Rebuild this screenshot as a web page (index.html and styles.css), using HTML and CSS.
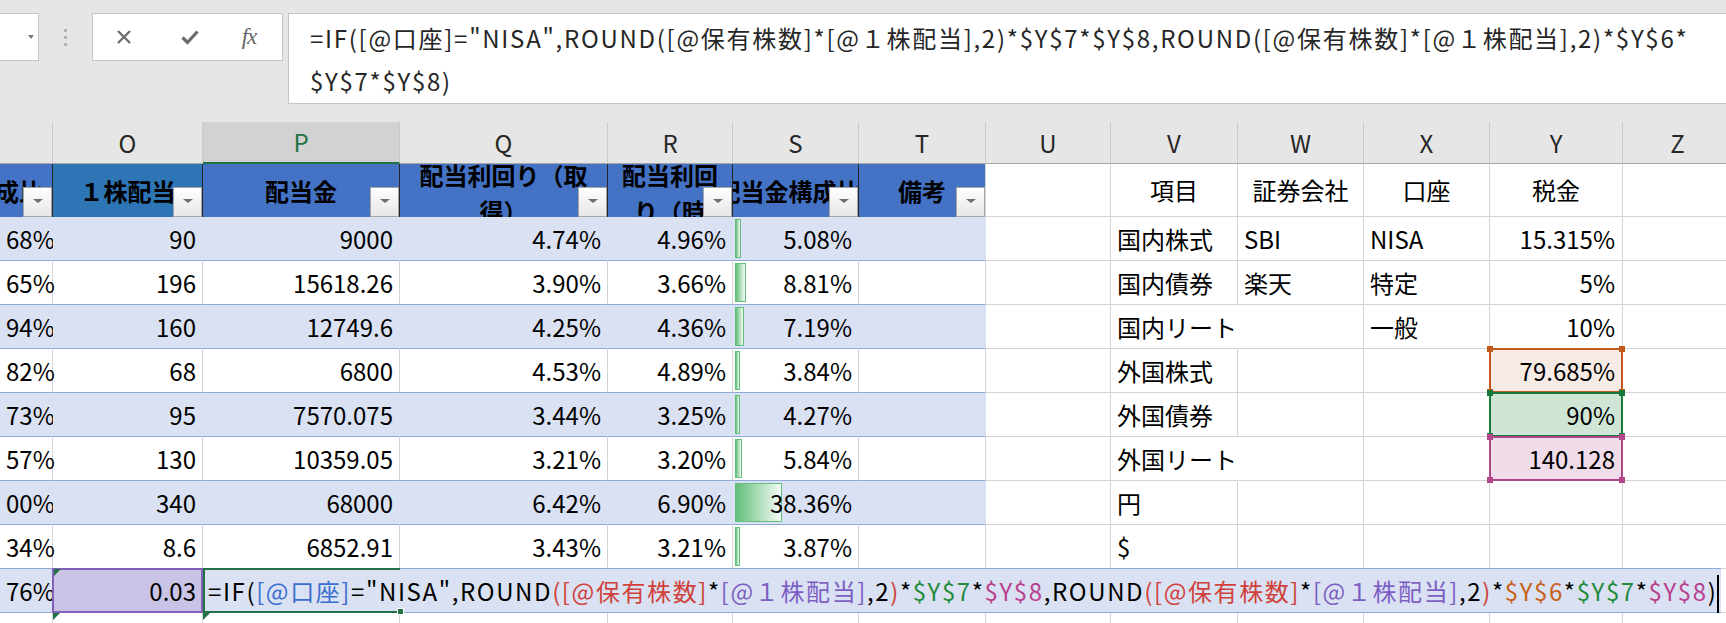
FILE: index.html
```html
<!DOCTYPE html>
<html lang="ja">
<head>
    <meta charset="UTF-8">
    <title>配当金一覧</title>
    <link rel="stylesheet" href="styles.css">
</head>
<body>
    <div class="topbar">
        <div class="namebox"><span class="nb-arrow"></span></div>
        <div class="grip"><i></i><i></i><i></i></div>
        <div class="fbtns">
            <span class="fbtn">
                <svg width="16" height="16" viewBox="0 0 16 16"><path d="M2 2 L14 14 M14 2 L2 14" stroke="#6a6a6a" stroke-width="2.2" fill="none"/></svg>
            </span>
            <span class="fbtn">
                <svg width="18" height="16" viewBox="0 0 18 16"><path d="M1.5 8.5 L6.5 13.5 L16.5 2.5" stroke="#6a6a6a" stroke-width="3.2" fill="none"/></svg>
            </span>
            <span class="fbtn fx">fx</span>
        </div>
        <div class="fbox">=IF([@口座]="NISA",ROUND([@保有株数]*[@１株配当],2)*$Y$7*$Y$8,ROUND([@保有株数]*[@１株配当],2)*$Y$6*<br>$Y$7*$Y$8)</div>
    </div>

    <div class="sheet">
        <!-- column letters -->
        <div class="row colhead">
            <div class="c"></div>
            <div class="c">O</div>
            <div class="c sel">P</div>
            <div class="c">Q</div>
            <div class="c">R</div>
            <div class="c">S</div>
            <div class="c">T</div>
            <div class="c">U</div>
            <div class="c">V</div>
            <div class="c">W</div>
            <div class="c">X</div>
            <div class="c">Y</div>
            <div class="c">Z</div>
        </div>

        <!-- table header -->
        <div class="row thead">
            <div class="c t first"><span>構成比</span><i class="flt"></i></div>
            <div class="c t alt">１株配当<i class="flt"></i></div>
            <div class="c t">配当金<i class="flt"></i></div>
            <div class="c t wrap"><div class="lines">配当利回り（取<br>得）</div><i class="flt"></i></div>
            <div class="c t wrap"><div class="lines">配当利回<br>り（時<br>価）</div><i class="flt"></i></div>
            <div class="c t"><span class="shift">配当金構成比</span><i class="flt"></i></div>
            <div class="c t last">備考<i class="flt"></i></div>
            <div class="c"></div>
            <div class="c ctr">項目</div>
            <div class="c ctr">証券会社</div>
            <div class="c ctr">口座</div>
            <div class="c ctr">税金</div>
            <div class="c"></div>
        </div>

        <div class="row band">
            <div class="c t">68%</div>
            <div class="c t">90</div>
            <div class="c t">9000</div>
            <div class="c t">4.74%</div>
            <div class="c t">4.96%</div>
            <div class="c t s"><span class="bar" style="width:6px"></span><span class="v">5.08%</span></div>
            <div class="c t"></div>
            <div class="c"></div>
            <div class="c l">国内株式</div>
            <div class="c l">SBI</div>
            <div class="c l">NISA</div>
            <div class="c r">15.315%</div>
            <div class="c"></div>
        </div>

        <div class="row">
            <div class="c t">65%</div>
            <div class="c t">196</div>
            <div class="c t">15618.26</div>
            <div class="c t">3.90%</div>
            <div class="c t">3.66%</div>
            <div class="c t s"><span class="bar" style="width:11px"></span><span class="v">8.81%</span></div>
            <div class="c t"></div>
            <div class="c"></div>
            <div class="c l">国内債券</div>
            <div class="c l">楽天</div>
            <div class="c l">特定</div>
            <div class="c r">5%</div>
            <div class="c"></div>
        </div>

        <div class="row band">
            <div class="c t">94%</div>
            <div class="c t">160</div>
            <div class="c t">12749.6</div>
            <div class="c t">4.25%</div>
            <div class="c t">4.36%</div>
            <div class="c t s"><span class="bar" style="width:9px"></span><span class="v">7.19%</span></div>
            <div class="c t"></div>
            <div class="c"></div>
            <div class="c l spill">国内リート</div>
            <div class="c l"></div>
            <div class="c l">一般</div>
            <div class="c r">10%</div>
            <div class="c"></div>
        </div>

        <div class="row">
            <div class="c t">82%</div>
            <div class="c t">68</div>
            <div class="c t">6800</div>
            <div class="c t">4.53%</div>
            <div class="c t">4.89%</div>
            <div class="c t s"><span class="bar" style="width:5px"></span><span class="v">3.84%</span></div>
            <div class="c t"></div>
            <div class="c"></div>
            <div class="c l">外国株式</div>
            <div class="c l"></div>
            <div class="c l"></div>
            <div class="c r ref-o">79.685%<span class="rb"><i class="h tl"></i><i class="h tr"></i><i class="h bl"></i><i class="h br"></i></span></div>
            <div class="c"></div>
        </div>

        <div class="row band">
            <div class="c t">73%</div>
            <div class="c t">95</div>
            <div class="c t">7570.075</div>
            <div class="c t">3.44%</div>
            <div class="c t">3.25%</div>
            <div class="c t s"><span class="bar" style="width:5px"></span><span class="v">4.27%</span></div>
            <div class="c t"></div>
            <div class="c"></div>
            <div class="c l">外国債券</div>
            <div class="c l"></div>
            <div class="c l"></div>
            <div class="c r ref-g">90%<span class="rb"><i class="h tl"></i><i class="h tr"></i><i class="h bl"></i><i class="h br"></i></span></div>
            <div class="c"></div>
        </div>

        <div class="row">
            <div class="c t">57%</div>
            <div class="c t">130</div>
            <div class="c t">10359.05</div>
            <div class="c t">3.21%</div>
            <div class="c t">3.20%</div>
            <div class="c t s"><span class="bar" style="width:7px"></span><span class="v">5.84%</span></div>
            <div class="c t"></div>
            <div class="c"></div>
            <div class="c l spill">外国リート</div>
            <div class="c l"></div>
            <div class="c l"></div>
            <div class="c r ref-m">140.128<span class="rb"><i class="h tl"></i><i class="h tr"></i><i class="h bl"></i><i class="h br"></i></span></div>
            <div class="c"></div>
        </div>

        <div class="row band">
            <div class="c t">00%</div>
            <div class="c t">340</div>
            <div class="c t">68000</div>
            <div class="c t">6.42%</div>
            <div class="c t">6.90%</div>
            <div class="c t s"><span class="bar" style="width:47px"></span><span class="v">38.36%</span></div>
            <div class="c t"></div>
            <div class="c"></div>
            <div class="c l">円</div>
            <div class="c l"></div>
            <div class="c l"></div>
            <div class="c r"></div>
            <div class="c"></div>
        </div>

        <div class="row">
            <div class="c t">34%</div>
            <div class="c t">8.6</div>
            <div class="c t">6852.91</div>
            <div class="c t">3.43%</div>
            <div class="c t">3.21%</div>
            <div class="c t s"><span class="bar" style="width:5px"></span><span class="v">3.87%</span></div>
            <div class="c t"></div>
            <div class="c"></div>
            <div class="c l">$</div>
            <div class="c l"></div>
            <div class="c l"></div>
            <div class="c r"></div>
            <div class="c"></div>
        </div>

        <!-- row being edited -->
        <div class="row band">
            <div class="c t">76%</div>
            <div class="c t pick">0.03<span class="rb ref-p"></span><i class="tri"></i></div>
            <div class="c t editc">
                <div class="edit">=IF(<span class="f1">[@口座]</span>="NISA",ROUND<span class="f2">([@保有株数]</span>*<span class="f3">[@１株配当]</span>,2<span class="f2">)</span>*<span class="f4">$Y$7</span>*<span class="f5">$Y$8</span>,ROUND<span class="f2">([@保有株数]</span>*<span class="f3">[@１株配当]</span>,2<span class="f2">)</span>*<span class="f6">$Y$6</span>*<span class="f4">$Y$7</span>*<span class="f5">$Y$8</span>)<span class="caret"></span></div>
                <div class="selbox"><span class="handle"></span></div>
            </div>
            <div class="c t"></div>
            <div class="c t"></div>
            <div class="c t"></div>
            <div class="c t"></div>
            <div class="c"></div>
            <div class="c"></div>
            <div class="c"></div>
            <div class="c"></div>
            <div class="c"></div>
            <div class="c"></div>
        </div>

        <div class="row">
            <div class="c t"></div>
            <div class="c t mark"><i class="tri"></i></div>
            <div class="c t mark"><i class="tri"></i></div>
            <div class="c t"></div>
            <div class="c t"></div>
            <div class="c t"></div>
            <div class="c t"></div>
            <div class="c"></div>
            <div class="c"></div>
            <div class="c"></div>
            <div class="c"></div>
            <div class="c"></div>
            <div class="c"></div>
        </div>
    </div>
</body>
</html>
```

FILE: styles.css
```css
* {
    box-sizing: border-box;
}
body {
    margin: 0;
    width: 1726px;
    height: 623px;
    overflow: hidden;
    background: #fff;
    font-family: "Noto Sans CJK JP", "Noto Sans", sans-serif;
    color: #000;
}

/* formula bar */
.topbar {
    height: 122px;
    background: #e6e6e6;
    display: flex;
    align-items: flex-start;
    padding-top: 13px;
}
.namebox {
    width: 49px;
    height: 48px;
    margin-left: -10px;
    background: #fff;
    border: 1px solid #c6c6c6;
    display: flex;
    align-items: center;
    justify-content: flex-end;
    padding-right: 4px;
}
.nb-arrow {
    width: 0;
    height: 0;
    border-left: 3.5px solid transparent;
    border-right: 3.5px solid transparent;
    border-top: 4px solid #7a7a7a;
}
.grip {
    width: 53px;
    height: 48px;
    display: flex;
    flex-direction: column;
    align-items: center;
    justify-content: center;
    gap: 4px;
}
.grip i {
    width: 3px;
    height: 3px;
    background: #b4b4b4;
}
.fbtns {
    width: 191px;
    height: 48px;
    background: #fff;
    border: 1px solid #c6c6c6;
    display: grid;
    grid-template-columns: 62px 70px 48px;
    align-items: center;
}
.fbtn {
    display: flex;
    justify-content: center;
    align-items: center;
}
.fx {
    font-family: "Liberation Serif", serif;
    font-style: italic;
    font-size: 23px;
    color: #666;
    letter-spacing: -1px;
}
.fbox {
    flex: 1;
    height: 91px;
    margin-left: 5px;
    margin-right: -10px;
    background: #fff;
    border: 1px solid #c6c6c6;
    padding: 2px 0 0 21px;
    font-size: 24px;
    letter-spacing: 1.72px;
    line-height: 43px;
    color: #262626;
    white-space: nowrap;
    overflow: hidden;
}

/* grid */
.row {
    display: grid;
    grid-template-columns: 53px 150px 197px 208px 125px 126px 127px 125px 127px 126px 126px 133px 110px;
}
.c {
    height: 44px;
    border-right: 1px solid #d4d4d4;
    border-bottom: 1px solid #d4d4d4;
    font-size: 24px;
    line-height: 43px;
    padding: 0 6px;
    white-space: nowrap;
}
.c.l {
    text-align: left;
}
.c.r {
    text-align: right;
    padding-right: 7px;
}
.c.ctr {
    text-align: center;
}
.spill {
    border-right-color: transparent;
}

.colhead .c {
    height: 42px;
    line-height: 41px;
    background: #e6e6e6;
    border-right-color: #cacaca;
    border-bottom-color: #a6a6a6;
    text-align: center;
    color: #262626;
}
.colhead .sel {
    background: #d2d2d2;
    color: #217346;
    border-bottom: 2px solid #217346;
    line-height: 40px;
}

.thead .c {
    height: 53px;
    line-height: 52px;
}
.thead .t {
    position: relative;
    overflow: hidden;
    padding: 0;
    background: #4472c4;
    font-weight: bold;
    line-height: 53px;
    border-bottom: none;
    border-right: 1px solid #262626;
    display: flex;
    justify-content: center;
}
.thead .t.alt {
    background: #2e75b6;
}
.thead .t.first {
    justify-content: flex-end;
    padding-right: 9px;
}
.thead .t.last {
    border-right-color: #d4d4d4;
}
.thead .wrap {
    align-items: flex-start;
}
.shift {
    margin-left: -14px;
}
.lines {
    margin-top: -7px;
    line-height: 36px;
    text-align: center;
}
.flt {
    position: absolute;
    right: 0;
    bottom: 0;
    width: 29px;
    height: 30px;
    border: 1px solid #a6a6a6;
    background: linear-gradient(#ffffff, #e6e6e6);
}
.flt::after {
    content: "";
    position: absolute;
    left: 50%;
    top: 50%;
    margin: -3px 0 0 -5px;
    border-left: 5px solid transparent;
    border-right: 5px solid transparent;
    border-top: 4px solid #6e6e6e;
}

/* table body */
.c.t {
    text-align: right;
    border-bottom-color: #8ea9db;
}
.band .c.t {
    background: #d9e1f2;
    border-right-color: #d9e1f2;
}
.s {
    position: relative;
}
.bar {
    position: absolute;
    left: 2px;
    top: 2px;
    bottom: 2px;
    border: 1px solid #63be7b;
    background: linear-gradient(to right, #63be7b, #f4fbf6);
}
.v {
    position: relative;
}

/* reference boxes */
.ref-o, .ref-g, .ref-m, .pick {
    position: relative;
}
.ref-o { background: #f7ebe6; }
.ref-g { background: #cfe5d6; }
.ref-m { background: #f0dbe8; }
.rb {
    position: absolute;
    top: -1px;
    left: -1px;
    right: -1px;
    bottom: -1px;
    border: 2px solid;
    z-index: 1;
}
.ref-o .rb { border-color: #c0591a; color: #c0591a; }
.ref-g .rb { border-color: #15793a; color: #15793a; }
.ref-m .rb { border-color: #b1478b; color: #b1478b; }
.h {
    position: absolute;
    width: 6px;
    height: 6px;
    background: currentColor;
}
.tl { left: -4px; top: -4px; }
.tr { right: -4px; top: -4px; }
.bl { left: -4px; bottom: -4px; }
.br { right: -4px; bottom: -4px; }

.band .c.pick {
    background: #c9c4e6;
}
.rb.ref-p {
    border-color: #7f62b8;
}
.tri {
    position: absolute;
    left: 1px;
    top: 0;
    width: 0;
    height: 0;
    border-top: 7px solid #217346;
    border-right: 7px solid transparent;
    z-index: 2;
}
.mark {
    position: relative;
}
.mark .tri {
    left: 0;
}

/* in-cell editing */
.editc {
    position: relative;
}
.edit {
    position: absolute;
    left: 0;
    top: -1px;
    height: 45px;
    background: #d9e1f2;
    border-top: 1px solid #8ea9db;
    border-bottom: 1px solid #8ea9db;
    padding: 0 2px 0 5px;
    font-size: 24px;
    letter-spacing: 1.6px;
    line-height: 43px;
    text-align: left;
    white-space: nowrap;
    z-index: 2;
}
.f1 { color: #3c6fd0; }
.f2 { color: #d0413b; }
.f3 { color: #7e5fc4; }
.f4 { color: #1f8a3c; }
.f5 { color: #b83f8e; }
.f6 { color: #c8601a; }
.caret {
    display: inline-block;
    width: 2px;
    height: 38px;
    background: #000;
    vertical-align: middle;
    margin-left: 0;
}
.selbox {
    position: absolute;
    left: 0;
    top: -1px;
    width: 197px;
    height: 45px;
    border: 2px solid #217346;
    border-right: none;
    z-index: 3;
}
.handle {
    position: absolute;
    right: -4px;
    bottom: -4px;
    width: 7px;
    height: 7px;
    background: #217346;
    border: 1px solid #fff;
}
```
